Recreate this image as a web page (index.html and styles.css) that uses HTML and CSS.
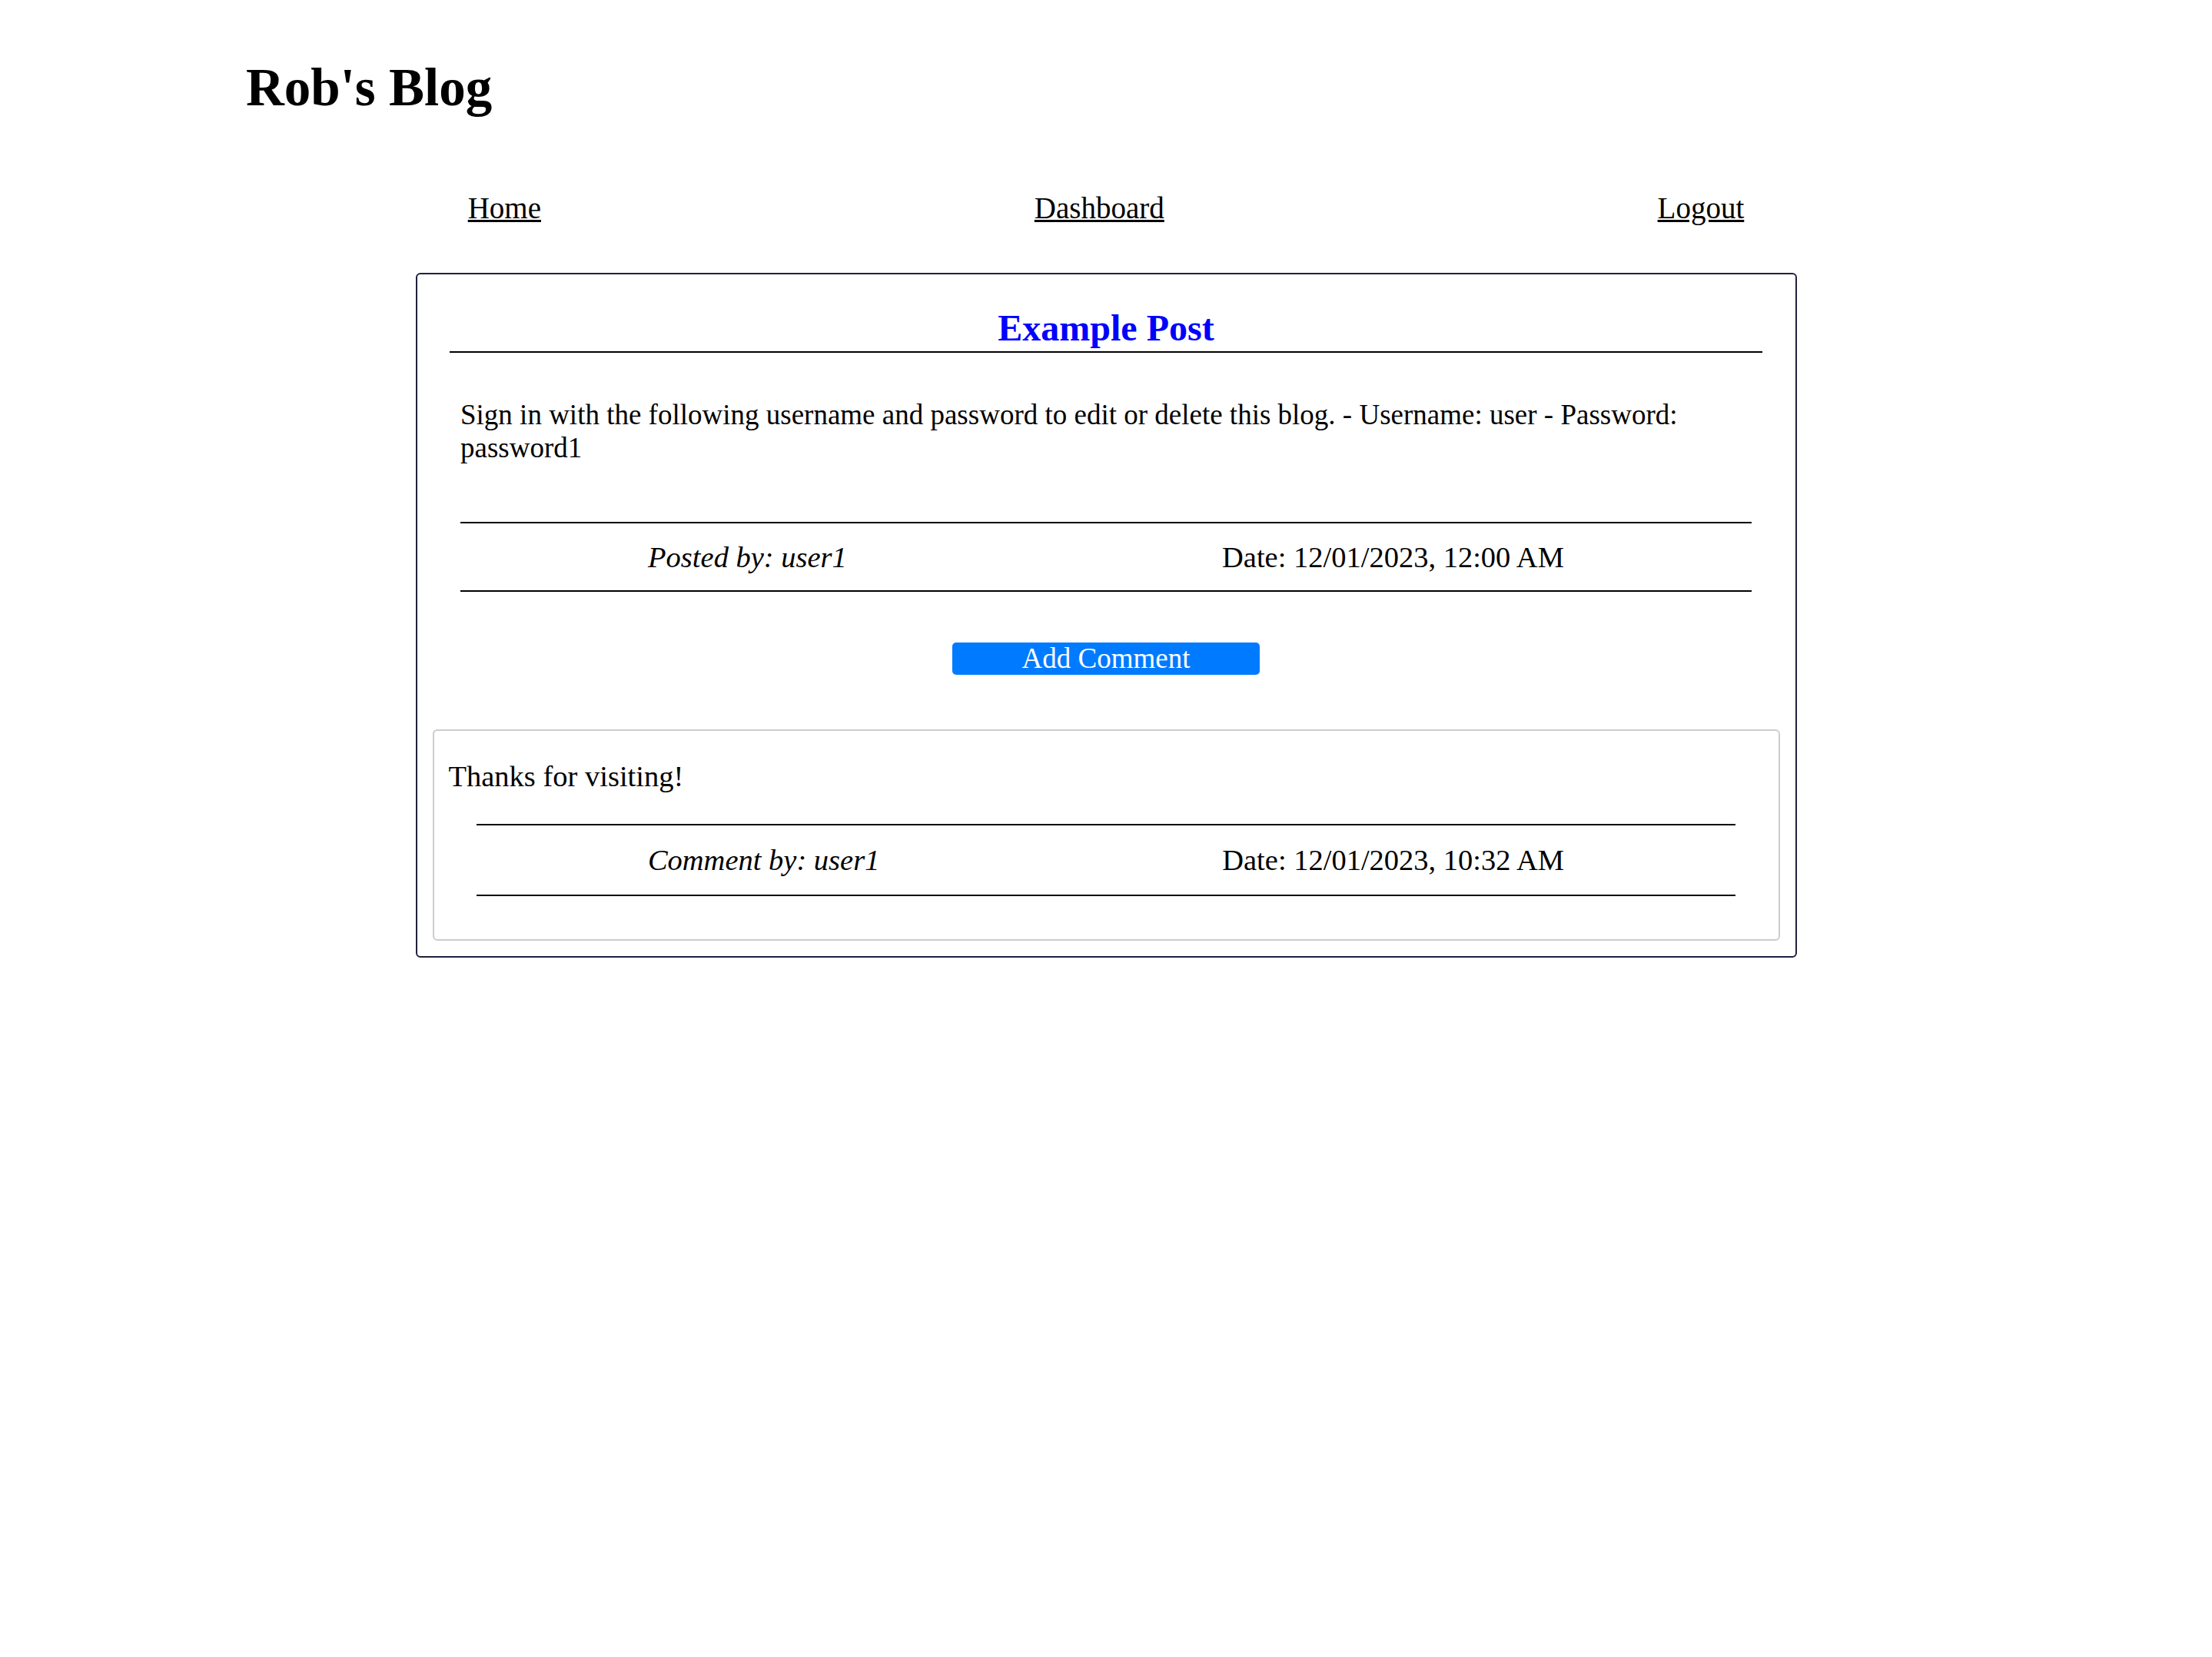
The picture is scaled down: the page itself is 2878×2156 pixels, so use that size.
FILE: index.html
```html
<!DOCTYPE html>
<html lang="en">
<head>
<meta charset="utf-8">
<title>Rob's Blog</title>
<link rel="stylesheet" href="styles.css">
</head>
<body>
<header class="site-header">
  <h1 class="site-title">Rob's Blog</h1>
</header>
<nav class="site-nav">
  <a class="nav-link" href="#">Home</a>
  <a class="nav-link" href="#">Dashboard</a>
  <a class="nav-link" href="#">Logout</a>
</nav>
<main class="post-card">
  <h2 class="post-title">Example Post</h2>
  <p class="post-body">Sign in with the following username and password to edit or delete this blog. - Username: user - Password: password1</p>
  <div class="meta post-meta">
    <span class="meta-author">Posted by: user1</span>
    <span class="meta-date">Date: 12/01/2023, 12:00 AM</span>
  </div>
  <div class="actions">
    <button class="btn-comment" type="button">Add Comment</button>
  </div>
  <section class="comment">
    <p class="comment-text">Thanks for visiting!</p>
    <div class="meta comment-meta">
      <span class="meta-author">Comment by: user1</span>
      <span class="meta-date">Date: 12/01/2023, 10:32 AM</span>
    </div>
  </section>
</main>
</body>
</html>
```

FILE: styles.css
```css
* {
  box-sizing: border-box;
}

body {
  margin: 0;
  background: #ffffff;
  color: #000000;
  font-family: "Liberation Serif", "Times New Roman", serif;
  font-size: 37px;
}

.site-header {
  padding: 75px 0 0 320px;
}

.site-title {
  margin: 0;
  font-size: 69px;
  font-weight: bold;
  line-height: normal;
}

.site-nav {
  width: 80%;
  margin: 94px auto 0;
  display: flex;
  justify-content: space-around;
  font-size: 39px;
}

.nav-link {
  color: #000000;
  text-decoration: underline;
}

.post-card {
  width: 1797px;
  margin: 62px auto 0;
  border: 2px solid #1f1f3f;
  border-radius: 6px;
  padding: 20px;
}

.post-title {
  margin: 22px 22.5px 0;
  padding-bottom: 3px;
  border-bottom: 2px solid #000000;
  color: #0000ff;
  font-size: 48px;
  font-weight: bold;
  text-align: center;
  line-height: normal;
}

.post-body {
  margin: 59px 36.5px 0;
}

.meta {
  margin: 0 36.5px;
  padding: 22px 0;
  border-top: 2px solid #000000;
  border-bottom: 2px solid #000000;
  display: flex;
  justify-content: space-around;
  font-size: 38.5px;
}

.post-meta {
  margin-top: 75px;
  padding: 21.5px 0;
}

.meta-author {
  font-style: italic;
}

.actions {
  margin-top: 65.5px;
  display: flex;
  justify-content: center;
}

.btn-comment {
  width: 400px;
  height: 42px;
  padding: 0;
  border: none;
  border-radius: 5px;
  background: #007bff;
  color: #ffffff;
  font-family: "Liberation Serif", "Times New Roman", serif;
  font-size: 37px;
  line-height: 42px;
}

.comment {
  margin-top: 71px;
  border: 2px solid #cccccc;
  border-radius: 6px;
  padding: 37px 19px 56px;
}

.comment-text {
  margin: 0;
  font-size: 38.5px;
}

.comment-meta {
  margin-top: 40.5px;
  padding: 23px 0;
}
```
